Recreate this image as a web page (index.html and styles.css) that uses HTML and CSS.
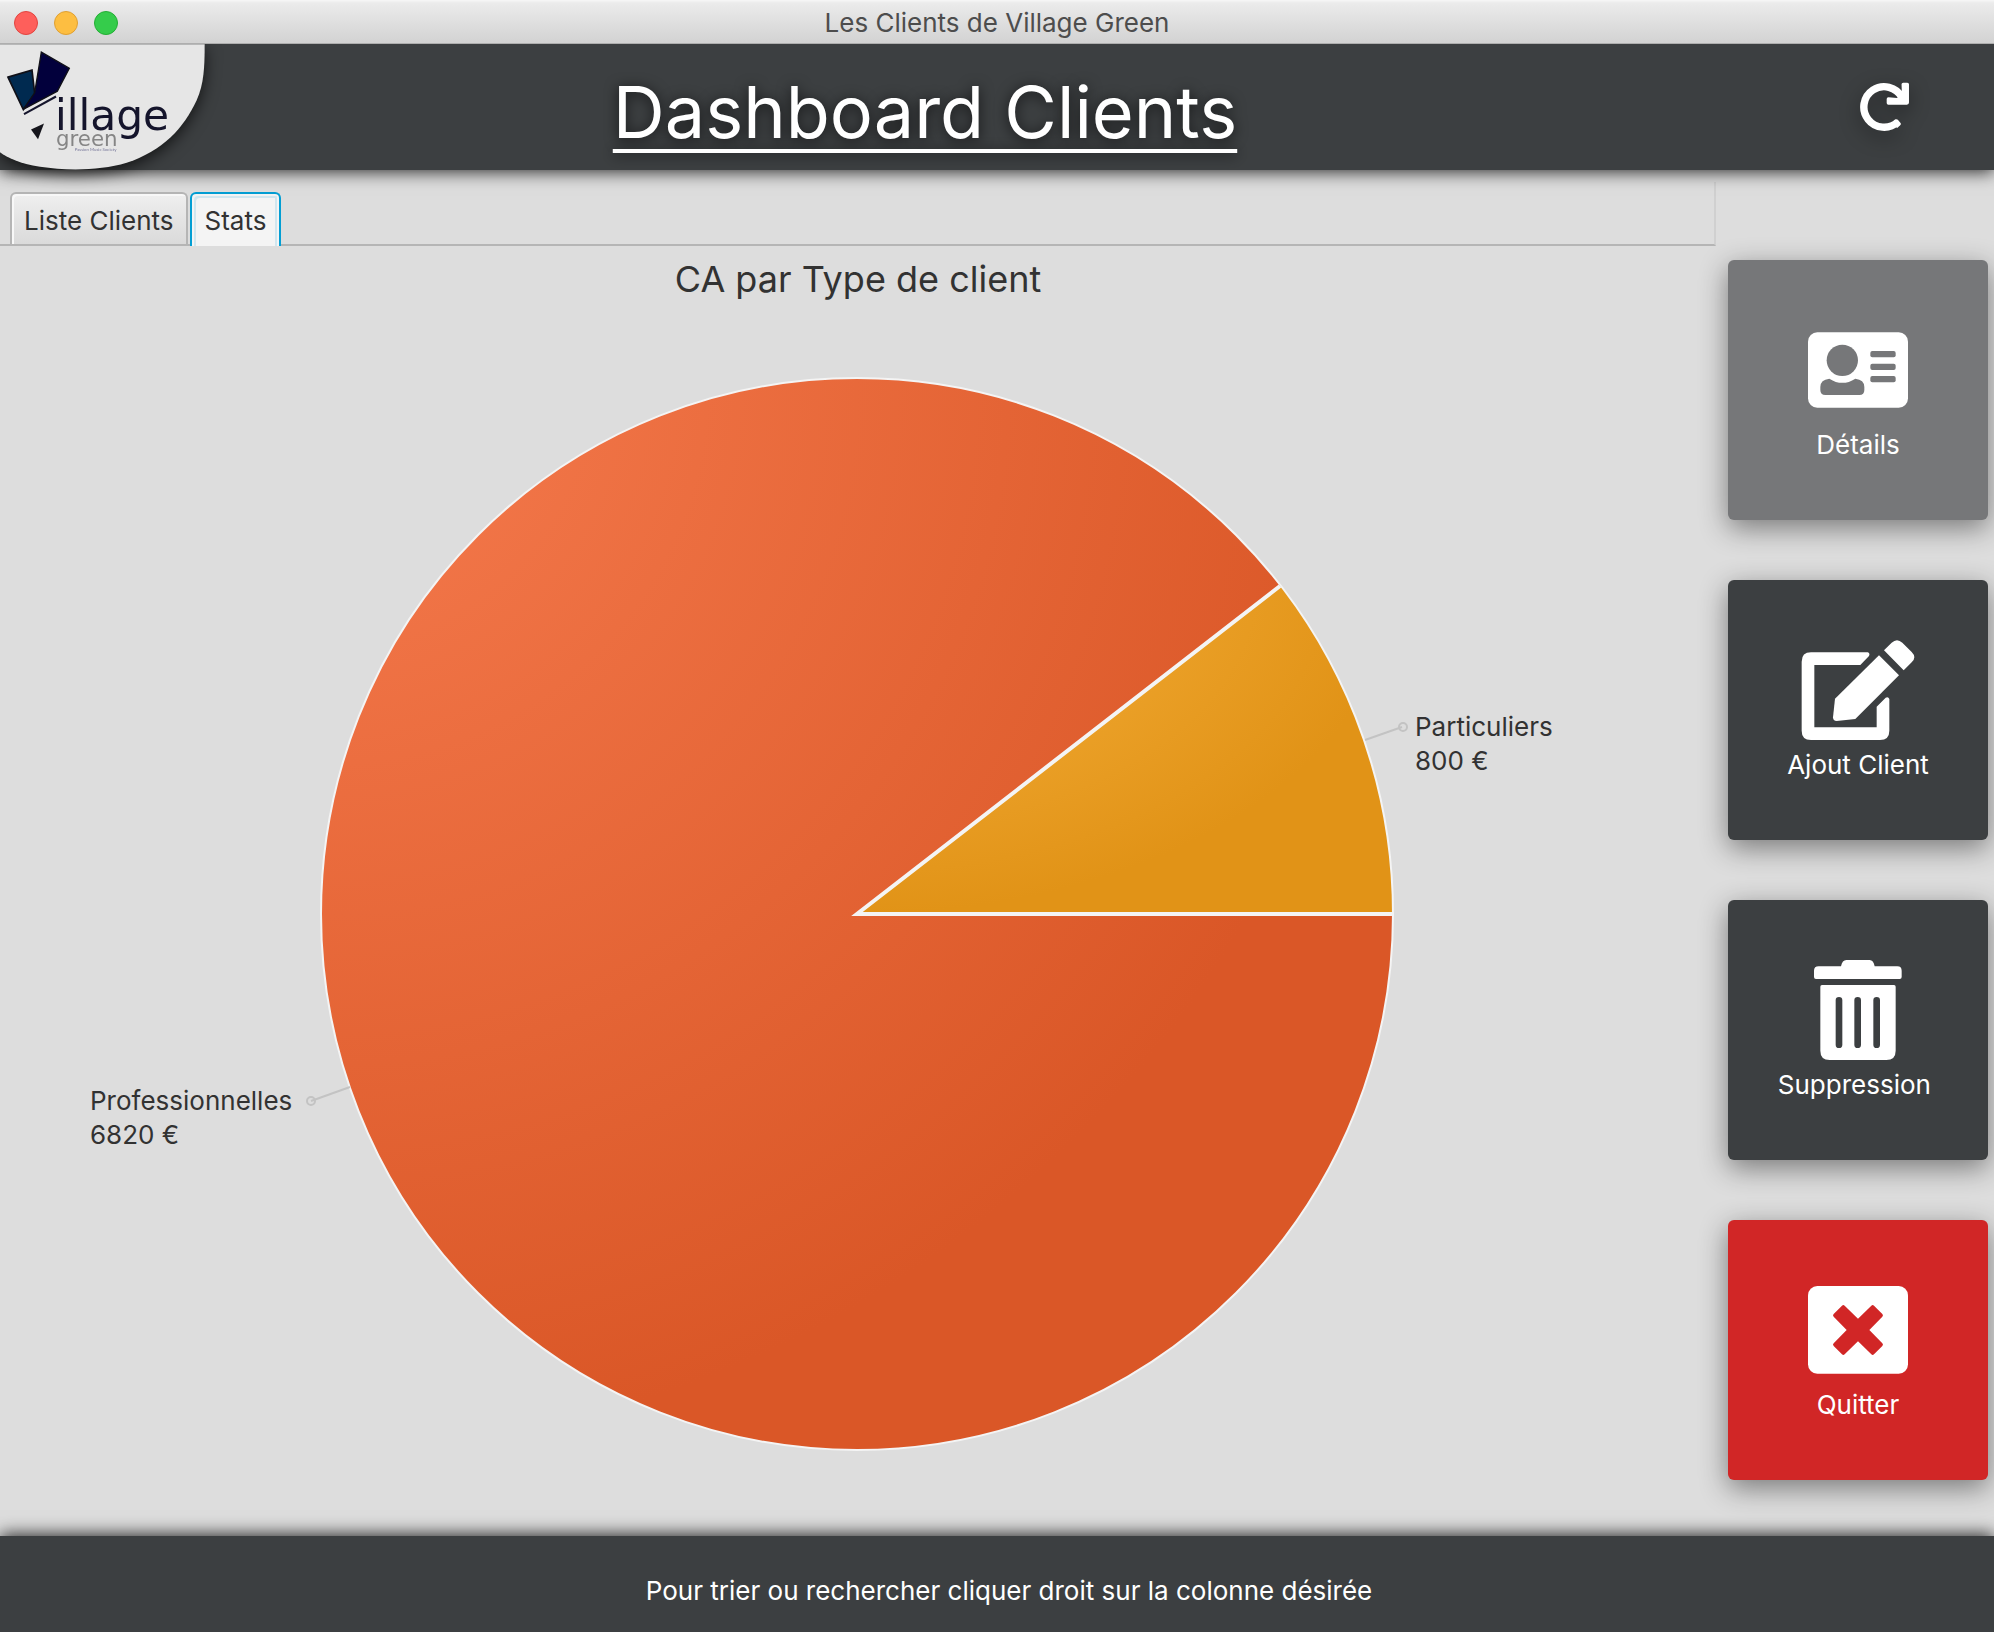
FILE: index.html
```html
<!DOCTYPE html>
<html lang="fr">
<head>
<meta charset="utf-8">
<title>Les Clients de Village Green</title>
<link rel="stylesheet" href="styles.css">
</head>
<body>
<div class="titlebar">
  <div class="lights">
    <button class="light close" aria-label="Fermer"></button>
    <button class="light minimize" aria-label="Réduire"></button>
    <button class="light maximize" aria-label="Agrandir"></button>
  </div>
  <span class="window-title">Les Clients de Village Green</span>
</div>

<header class="header">
  <svg class="logo" viewBox="0 132 618 380" role="img" aria-label="Village Green">
    <path d="M0 132H614C614 200 612 250 590 300C550 385 490 450 380 488C300 512 200 512 120 500C60 490 20 472 0 456Z" fill="#e6e6e6"/>
    <path d="M24 231L96 210L104 280L70 328Z" fill="#002a50" stroke="#101018" stroke-width="5"/>
    <path d="M124 156L208 204L172 273L71 327L104 278Z" fill="#02003c" stroke="#101018" stroke-width="4"/>
    <path d="M72 342L168 289" stroke="#15152c" stroke-width="6"/>
    <path d="M93 388L132 370L114 417Z" fill="#15151c"/>
    <text class="logo-name" x="165" y="391">illage</text>
    <text class="logo-sub" x="168" y="437">green</text>
    <text class="logo-tiny" x="224" y="452">Passion Music Society</text>
  </svg>
  <h1 class="heading">Dashboard Clients</h1>
  <button class="refresh" aria-label="Actualiser">
    <svg viewBox="510 248 148 148">
      <path d="M622 366A60 60 0 1 1 634 293" fill="none" stroke="#fff" stroke-width="22"/>
      <path d="M638 250H650Q655 250 655 255V309Q655 315 649 315H594Q589 315 589 310V298Q589 293 594 293L620 295L634 282L633 255Q633 250 638 250Z" fill="#fff"/>
      <path d="M604 369L614 360Q618 356 622 360L630 369Q633 372 629 376L620 384Z" fill="#fff"/>
    </svg>
  </button>
</header>

<div class="body">
  <main class="main">
    <div class="tabs" role="tablist">
      <button class="tab" role="tab" aria-selected="false">Liste Clients</button>
      <button class="tab active" role="tab" aria-selected="true">Stats</button>
    </div>
    <section class="chart">
      <h2 class="chart-title">CA par Type de client</h2>
      <svg class="pie" viewBox="0 300 1716 1236" role="img" aria-label="CA par Type de client">
        <defs>
          <radialGradient id="pro" cx="0" cy="0" r="1" fx="0" fy="0">
            <stop offset="0" stop-color="#f67b4e"/>
            <stop offset="1" stop-color="#da5727"/>
          </radialGradient>
          <radialGradient id="part" cx="0" cy="0" r="1" fx="0" fy="0">
            <stop offset="0" stop-color="#f8b23e"/>
            <stop offset="1" stop-color="#e19317"/>
          </radialGradient>
        </defs>
        <circle cx="857" cy="914" r="536" fill="url(#pro)"/>
        <path d="M857 914L1280.500 585.500A536 536 0 0 1 1393 914Z" fill="url(#part)"/>
        <circle class="edge rim" cx="857" cy="914" r="536"/>
        <path class="edge" d="M1280 586L857 914H1393"/>
        <path class="leader" d="M1365 740L1402 727M350 1087L311 1101"/>
        <circle class="leader" cx="1403" cy="727" r="4"/>
        <circle class="leader" cx="311" cy="1101" r="4"/>
        <text class="label" x="1415" y="736">Particuliers</text>
        <text class="label" x="1415" y="770">800 €</text>
        <text class="label" x="90" y="1110">Professionnelles</text>
        <text class="label" x="90" y="1144">6820 €</text>
      </svg>
    </section>
  </main>

  <aside class="sidebar">
    <button class="action" disabled>
      <svg viewBox="324 210 300 300">
        <rect x="324" y="247" width="300" height="226" rx="28" fill="#fff"/>
        <g fill="#767779">
          <circle cx="427" cy="331" r="47"/>
          <path d="M388 386Q427 411 466 386Q493 389 493 411V420Q493 435 478 435H376Q361 435 361 420V411Q361 389 388 386Z"/>
          <rect x="511" y="303" width="76" height="19" rx="6"/>
          <rect x="511" y="341" width="76" height="19" rx="6"/>
          <rect x="511" y="378" width="76" height="19" rx="6"/>
        </g>
      </svg>
      <span>Détails</span>
    </button>
    <button class="action">
      <svg class="wide" viewBox="305 240 340 300" fill="#fff">
        <path d="M334 277H504Q512 280 508 288L482 315H344V502H531V440L558 413Q566 409 569 417V512Q569 540 541 540H334Q306 540 306 512V305Q306 277 334 277Z"/>
        <path d="M538 286L598 346L467 477L411 483Q400 483 400 472L406 416Z"/>
        <path d="M553 271L576 248Q592 233 608 248L636 276Q652 292 636 307L612 331Z"/>
      </svg>
      <span>Ajout Client</span>
    </button>
    <button class="action">
      <svg viewBox="324 240 300 300" fill="#fff">
        <path d="M356 259H423Q427 240 439 240H509Q520 240 524 259H592Q605 259 605 272V291Q605 297 599 297H348Q342 297 342 291V272Q342 259 356 259Z"/>
        <path fill-rule="evenodd" d="M366 315H582Q587 315 587 320V512Q587 540 559 540H389Q361 540 361 512V320Q361 315 366 315ZM407 361V494A10 10 0 0 0 427 494V361A10 10 0 0 0 407 361ZM463 361V494A10 10 0 0 0 483 494V361A10 10 0 0 0 463 361ZM520 361V494A10 10 0 0 0 540 494V361A10 10 0 0 0 520 361Z"/>
      </svg>
      <span>Suppression&nbsp;</span>
    </button>
    <button class="action quit">
      <svg viewBox="324 240 300 300">
        <rect x="324" y="258" width="300" height="263" rx="28" fill="#fff"/>
        <path d="M426 317Q430 313 434 317L474 356L514 317Q518 313 522 317L547 342Q551 346 547 350L508 390L547 430Q551 434 547 438L522 463Q518 467 514 463L474 424L434 463Q430 467 426 463L401 438Q397 434 401 430L440 390L401 350Q397 346 401 342Z" fill="#d12626"/>
      </svg>
      <span>Quitter</span>
    </button>
  </aside>
</div>

<footer class="footer">Pour trier ou rechercher cliquer droit sur la colonne désirée</footer>
</body>
</html>
```
FILE: styles.css
```css
* { box-sizing: border-box; }

body {
  margin: 0;
  min-height: 100vh;
  display: flex;
  flex-direction: column;
  background: #ddd;
  color: #323232;
  font: 26px/34px Inter, "Liberation Sans", sans-serif;
}

button { font: inherit; border: 0; padding: 0; margin: 0; }
svg { display: block; }

.titlebar {
  position: relative;
  z-index: 2;
  display: grid;
  grid-template-columns: 1fr auto 1fr;
  align-items: center;
  height: 44px;
  padding: 2px 14px 0;
  background: linear-gradient(#f7f7f7 0, #ebebeb 3px, #d3d3d3 42px);
  border-bottom: 1px solid #aeaeae;
  color: #4d4d4d;
}
.lights { display: flex; gap: 16px; }
.light { width: 24px; height: 24px; border-radius: 50%; border: 1px solid; }
.close { background: #fe5f5b; border-color: #e2443f; }
.minimize { background: #fdbe41; border-color: #e0a032; }
.maximize { background: #35cc4b; border-color: #24ae35; }

.header {
  position: relative;
  z-index: 1;
  display: grid;
  grid-template-columns: 206px 1fr 350px;
  align-items: start;
  height: 126px;
  background: #3c3f41;
  box-shadow: 0 2px 16px rgba(0, 0, 0, 0.8);
  color: #fff;
}
.logo { width: 206px; height: 127px; overflow: visible; filter: drop-shadow(0 4px 8px rgba(0, 0, 0, 0.7)); }
.logo-name { font-family: "DejaVu Sans", sans-serif; font-size: 127px; fill: #15152c; }
.logo-sub { font-family: "DejaVu Sans", sans-serif; font-size: 64px; fill: #858585; }
.logo-tiny { font-family: Lato, sans-serif; font-size: 13px; fill: #77779a; }
.heading {
  justify-self: center;
  margin: 24px 0 0;
  font-size: 72px;
  line-height: 88px;
  font-weight: 400;
  text-decoration: underline;
  text-decoration-thickness: 4px;
  text-underline-offset: 11px;
  text-decoration-skip-ink: none;
  text-shadow: 0 2px 14px rgba(0, 0, 0, 0.7);
}
.refresh { justify-self: end; margin: 38px 84px 0 0; background: none; filter: drop-shadow(0 6px 10px rgba(0, 0, 0, 0.4)); }
.refresh svg { width: 50px; height: 50px; }

.body { flex: 1; display: flex; }
.main { flex: 1; min-width: 0; display: flex; flex-direction: column; }
.tabs {
  display: flex;
  align-items: flex-end;
  gap: 2px;
  height: 64px;
  margin-top: 12px;
  padding-left: 10px;
  border-bottom: 2px solid #b5b5b5;
  border-right: 2px solid #d0d0d0;
}
.tab {
  height: 52px;
  padding: 4px 12px 0;
  border: 2px solid #b5b5b5;
  border-bottom: 0;
  border-radius: 6px 6px 0 0;
  background: linear-gradient(#efefef, #dadada);
  box-shadow: inset 2px 2px #f8f8f8;
  color: #323232;
}
.tab.active {
  height: 54px;
  margin-bottom: -2px;
  padding: 2px 13px 0;
  border-color: #039ed3;
  background: #f4f4f4;
  box-shadow: inset 2px 2px #f4f4f4, inset -2px 0 #f4f4f4, inset 4px 4px #d0e6ef, inset -4px 0 #d0e6ef;
}

.chart { flex: 1; display: flex; flex-direction: column; }
.chart-title {
  margin: 10px 0 0;
  height: 44px;
  text-align: center;
  font-size: 36px;
  line-height: 46px;
  font-weight: 400;
}
.pie { width: 100%; }
.edge { fill: none; stroke: #f4f4f4; stroke-width: 4; }
.rim { stroke-width: 2; }
.leader { fill: none; stroke: #c3c3c3; stroke-width: 2; }
.label { fill: #323232; font-size: 26px; }

.sidebar {
  display: flex;
  flex-direction: column;
  gap: 60px;
  padding: 90px 6px 56px 12px;
}
.action {
  display: flex;
  flex-direction: column;
  align-items: center;
  justify-content: center;
  gap: 10px;
  width: 260px;
  height: 260px;
  border-radius: 6px;
  background: #3c3f41;
  box-shadow: 0 8px 28px rgba(0, 0, 0, 0.45);
  color: #fff;
  line-height: 30px;
}
.action:disabled { background: #767779; }
.quit { background: #d12626; }
.action svg { width: 100px; height: 100px; }
.action svg.wide { width: 114px; }

.footer {
  position: relative;
  display: flex;
  align-items: center;
  justify-content: center;
  height: 96px;
  padding: 14px 0 0 24px;
  background: #3c3f41;
  box-shadow: 0 -2px 16px rgba(0, 0, 0, 0.8);
  color: #fff;
}
```
